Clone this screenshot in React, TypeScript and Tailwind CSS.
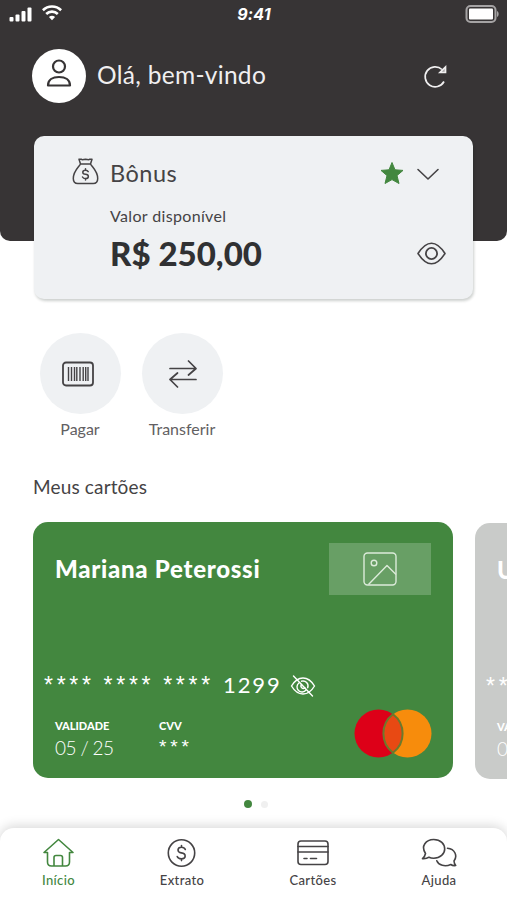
import type { ReactNode } from 'react'

function StatusBar() {
  return (
    <div className="flex h-7 items-center justify-between pl-[9px] pr-[8px] text-white">
      <div className="flex w-[200px] items-center gap-[9px]">
        <svg className="-mt-[1px]" width="24" height="16" viewBox="0 0 24 16" fill="currentColor">
          <rect x="0.5" y="11" width="4" height="4.500" rx="1" />
          <rect x="6.500" y="8.500" width="4" height="7" rx="1" />
          <rect x="12.500" y="5" width="4" height="10.500" rx="1" />
          <rect x="18.500" y="1.500" width="4" height="14" rx="1" />
        </svg>
        <svg className="-mt-[2px]" width="20" height="16" viewBox="0 0 20 16" fill="none" stroke="currentColor" strokeWidth="2.600">
          <path d="M0.900 5.200a13 13 0 0 1 18.200 0" />
          <path d="M4.200 9a8.300 8.300 0 0 1 11.600 0" />
          <path d="M6.900 12a4.700 4.700 0 0 1 6.200 0L10 15.200Z" fill="currentColor" stroke="none" />
        </svg>
      </div>
      <span className="font-[Inter] text-[16px] font-bold italic leading-7 tracking-[0.2px]">9:41</span>
      <div className="flex w-[200px] justify-end">
        <svg width="34" height="18" viewBox="0 0 34 18">
          <rect x="1.500" y="1" width="29" height="16" rx="4" fill="none" stroke="#a5a3a4" strokeWidth="2" />
          <rect x="4" y="3.500" width="24" height="11" rx="1" fill="#fff" />
          <path d="M32 6c2.200.8 2.200 5.200 0 6Z" fill="#a5a3a4" />
        </svg>
      </div>
    </div>
  )
}

function BonusCard() {
  return (
    <div className="mx-[34px] mt-[33px] h-[163px] w-[439px] rounded-[10px] bg-[#eff1f3] pl-[38px] pr-[27px] pt-[19px] text-[#454345] shadow-[1px_2px_3px_rgba(0,20,10,0.2)]">
      <div className="flex h-[36px] items-center">
        <svg className="-mt-[4px]" width="27" height="28" viewBox="0 0 27 28" fill="none" stroke="currentColor" strokeWidth="1.500" strokeLinejoin="round" strokeLinecap="round">
          <path d="M8.500 7 7 2.200h2.300l1 .6 3.200-.6 3.200.6 1-.6H20L18.500 7ZM8.500 7C7 10 1.300 14 1.300 21.500c0 3.500 1.500 5 4.500 5h15.400c3 0 4.500-1.500 4.500-5 0-7.500-5.700-11.500-7.200-14.500" />
          <path d="M16.200 14.700c-.5-1-1.500-1.500-2.700-1.500-3.600 0-3.600 4 0 4.100 3.800.1 3.800 4.300 0 4.300-1.500 0-2.500-.6-3-1.600M13.500 11.800v1.400M13.500 21.600V23" />
        </svg>
        <span className="ml-[11px] text-[23.500px] leading-[36px] tracking-[0.500px]">Bônus</span>
        <svg className="ml-auto" width="24" height="24" viewBox="0 0 24 24" fill="#43873f" stroke="#43873f" strokeWidth="1" strokeLinejoin="round">
          <path d="m12 1.500 3 7.300 8 .6-6 5.200 2 7.900-7-3.900-7 3.900 2-7.900-6-5.200 8-.6Z" />
        </svg>
        <svg className="ml-[12px] mr-[6px] mt-[2px]" width="24" height="14" viewBox="0 0 24 14" fill="none" stroke="currentColor" strokeWidth="1.600" strokeLinecap="round" strokeLinejoin="round">
          <path d="m2 2.500 10 9.500 10-9.500" />
        </svg>
      </div>
      <p className="ml-[38px] mt-[14px] text-[16px] leading-[22px] tracking-[0.350px]">Valor disponível</p>
      <div className="ml-[38px] mt-[6px] flex h-[40px] items-center justify-between">
        <span className="text-[33px] font-black leading-[40px] text-[#303133]">R$ 250,00</span>
        <svg className="mt-[2px]" width="29" height="24" viewBox="0 0 29 24" fill="none" stroke="currentColor" strokeWidth="1.600">
          <path d="M1 11.500C5.500 4.500 9 1.200 14.500 1.200s9 3.300 13.500 10.300C23.500 18.500 20 21.800 14.500 21.800S5.500 18.500 1 11.500Z" strokeLinejoin="round" />
          <circle cx="14.500" cy="11.500" r="5.600" strokeWidth="1.800" />
        </svg>
      </div>
    </div>
  )
}

function Action({ label, children }: { label: string; children: ReactNode }) {
  return (
    <div className="flex w-[81px] flex-col items-center text-[#454345]">
      <div className="flex size-[81px] items-center justify-center rounded-full bg-[#eff1f3]">{children}</div>
      <span className="-ml-[1px] mt-[4px] text-[16px] leading-[22px] text-[#626062]">{label}</span>
    </div>
  )
}

function Brand() {
  return (
    <svg width="78" height="49" viewBox="0 0 78 49">
      <circle cx="24.500" cy="24.500" r="24" fill="#dd0018" />
      <circle cx="53.500" cy="24.500" r="24" fill="#f78c0c" />
      <path d="M39 5.300a24 24 0 0 1 0 38.400 24 24 0 0 1 0-38.400Z" fill="#e84913" stroke="#6b7a2c" strokeWidth="2" />
    </svg>
  )
}

function BankCard({ name, color, children, offset }: { name: string; color: string; offset?: boolean; children?: ReactNode }) {
  return (
    <div className={`${color} ${offset ? 'mt-[1px]' : ''} h-[256px] w-[420px] shrink-0 rounded-[15px] text-white`}>
      <div className="flex h-[73px] items-start justify-between pl-[22px] pr-[22px] pt-[21px]">
        <span className="whitespace-nowrap text-[24px] font-black leading-[52px] tracking-[0.720px]">{name}</span>
        <div className="flex h-[52px] w-[102px] items-center justify-center bg-white/20">
          <svg width="34" height="34" viewBox="0 0 34 34" fill="none" stroke="#dcebda" strokeWidth="1.400" strokeLinejoin="round">
            <rect x="1" y="1" width="32" height="32" rx="3.500" />
            <circle cx="11" cy="11" r="2.800" />
            <path d="M5.500 32.500 24 13.500l9 9" />
          </svg>
        </div>
      </div>
      <div className="mt-[75px] flex h-[32px] items-center pl-[11px]">
        <div className="-mt-[3px] flex w-[179px] shrink-0 gap-[9px] font-['Liberation_Sans',sans-serif] text-[23px] leading-[32px] tracking-[3.700px]">
          <span>****</span>
          <span>****</span>
          <span>****</span>
        </div>
        <span className="-mt-[2px] text-[22px] leading-[32px] tracking-[1.900px]">1299</span>
        <svg className="ml-[8px]" width="26" height="22" viewBox="0 0 26 22" fill="none" stroke="currentColor" strokeWidth="1.400" strokeLinecap="round">
          <path d="M1.500 11C4.500 6 8 3 13 3s8.500 3 11.500 8c-3 5-6.500 8-11.500 8S4.500 16 1.500 11Z" />
          <path d="M9 8a5 5 0 1 0 7 7M11.500 6.200a5 5 0 0 1 6.200 6.500M11.500 9.500a2.500 2.500 0 0 0 3.500 3.500" />
          <path d="m3.500 1 19 20" />
        </svg>
      </div>
      <div className="flex h-[60px] pl-[22px] pt-[16px]">
        <div className="w-[104px]">
          <p className="text-[11px] font-black leading-[16px]">VALIDADE</p>
          <p className="mt-[1px] text-[19px] font-light leading-[26px] tracking-[-0.600px]">05 / 25</p>
        </div>
        <div className="w-[195px]">
          <p className="text-[11px] font-black leading-[16px]">CVV</p>
          <p className="mt-[1px] font-['Liberation_Sans',sans-serif] text-[19px] leading-[24px] tracking-[3.900px]">***</p>
        </div>
        <div className="-mt-[9px]">{children}</div>
      </div>
    </div>
  )
}

function NavItem({ label, width, active, children }: { label: string; width: string; active?: boolean; children: ReactNode }) {
  return (
    <div className={`flex flex-col items-center ${width} ${active ? 'text-[#43873f]' : 'text-[#454345]'}`}>
      <svg width="36" height="30" viewBox="0 0 36 30" fill="none" stroke="currentColor" strokeWidth="1.600" strokeLinejoin="round" strokeLinecap="round">
        {children}
      </svg>
      <span className="mt-[2px] text-[13px] font-medium leading-[20px] tracking-[0.350px]">{label}</span>
    </div>
  )
}

export default function App() {
  return (
    <div className="flex h-[900px] w-[507px] flex-col overflow-hidden bg-white font-[Lato,sans-serif]">
      <header className="h-[241px] shrink-0 rounded-b-[10px] bg-[#373435]">
        <StatusBar />
        <div className="mt-[21px] flex h-[54px] items-center pl-[32px] pr-[59px] text-[#f0eff0]">
          <div className="flex size-[54px] items-center justify-center rounded-full bg-white text-[#373435]">
            <svg className="-mt-[7px]" width="26" height="30" viewBox="0 0 26 30" fill="none" stroke="currentColor" strokeWidth="2.200" strokeLinejoin="round">
              <circle cx="13" cy="8.500" r="6" />
              <path d="M2 27.500c0-5.500 4.500-8.500 11-8.500s11 3 11 8.500Z" />
            </svg>
          </div>
          <span className="-mt-[2px] ml-[11px] text-[24.500px] leading-[36px] tracking-[0.300px]">Olá, bem-vindo</span>
          <svg className="ml-auto" width="25" height="25" viewBox="0 0 25 25" fill="none" stroke="currentColor" strokeWidth="1.700">
            <path d="M21 17.500A10 10 0 1 1 19 5.500" />
            <path d="M22.500 3v5.500H17Z" fill="currentColor" fillOpacity="0.600" />
          </svg>
        </div>
        <BonusCard />
      </header>

      <main className="flex h-[587px] shrink-0 flex-col">
        <div className="mt-[92px] flex gap-[21px] pl-[40px]">
          <Action label="Pagar">
            <svg className="-ml-[5px]" width="32" height="26" viewBox="0 0 32 26" fill="none" stroke="currentColor" strokeWidth="1.800">
              <rect x="1" y="1.500" width="30" height="23" rx="3" />
              <path d="M6.500 6v14M9.500 6v14M12.500 6v14M14.800 6v14M18 6v14M21.200 6v14M23.700 6v14M26 6v14" strokeWidth="1.400" />
            </svg>
          </Action>
          <Action label="Transferir">
            <svg width="28" height="30" viewBox="0 0 28 30" fill="none" stroke="currentColor" strokeWidth="1.700" strokeLinecap="round" strokeLinejoin="round">
              <path d="M1 9.500h26M19.500 2l7.500 7.500-7.500 6.500M27 20.500H1M8.500 14 1 20.500 8.500 28" />
            </svg>
          </Action>
        </div>
        <h2 className="mt-[34px] pl-[33px] text-[19px] leading-[26px] tracking-[0.150px] text-[#454345]">Meus cartões</h2>
        <div className="mt-[22px] flex gap-[22px] pl-[33px]">
          <BankCard name="Mariana Peterossi" color="bg-[#43873f]">
            <Brand />
          </BankCard>
          <BankCard name="U" color="bg-[#c9cbc9]" offset />
        </div>
        <div className="mt-[21px] flex items-center gap-[9px] pl-[244px]">
          <i className="size-[8px] rounded-full bg-[#43873f]" />
          <i className="size-[7px] rounded-full bg-[#f0f0f0]" />
        </div>
      </main>

      <nav className="flex h-[72px] shrink-0 rounded-t-[14px] bg-white pt-[10px] shadow-[0_-2px_12px_rgba(0,0,0,0.16)]">
        <NavItem label="Início" width="w-[117px]" active>
          <path d="M3 14.500 17.500 1.500l14.500 13M3 14.500h3.500V24c0 3 1 4 4 4h14c3 0 4-1 4-4v-9.500H32M13 28v-8.500c0-1.500.5-2 2-2h4.500c1.500 0 2 .5 2 2V28" />
        </NavItem>
        <NavItem label="Extrato" width="w-[130px]">
          <circle cx="17.500" cy="15" r="13.200" />
          <path d="M21.300 11.500c-.6-1.400-2-2.200-3.800-2.200-4.500 0-4.700 5-.2 5.600 5.300.6 5 6-.1 5.900-2 0-3.400-.8-4-2.300M17.500 7.500v1.800M17.500 20.800v1.800" />
        </NavItem>
        <NavItem label="Cartões" width="w-[132px]">
          <rect x="3" y="3" width="30" height="23.500" rx="3" />
          <path d="M3 8.500h30M3 14h30M9 20.500h3M15.500 20.500h6" />
        </NavItem>
        <NavItem label="Ajuda" width="w-[120px]">
          <path d="M4.500 15.500C-.5 8 5 1.500 12.700 1.500c7 0 11 4.500 11 9.500s-4.500 9.200-11 9.200c-2 0-3.500-.4-4.700-1-1.700 1.200-3.800 1.700-6.500 1.500 1.500-1.300 2.500-2.700 3-5.200Z" />
          <path d="M26.500 10.300c7.500.8 10.300 7.500 6.500 12.700.1 1.800.6 3.200 1.700 4.500-2.200.3-3.700-.1-4.900-1-5.800 2.700-12.300.8-14-3.700" />
        </NavItem>
      </nav>
    </div>
  )
}
